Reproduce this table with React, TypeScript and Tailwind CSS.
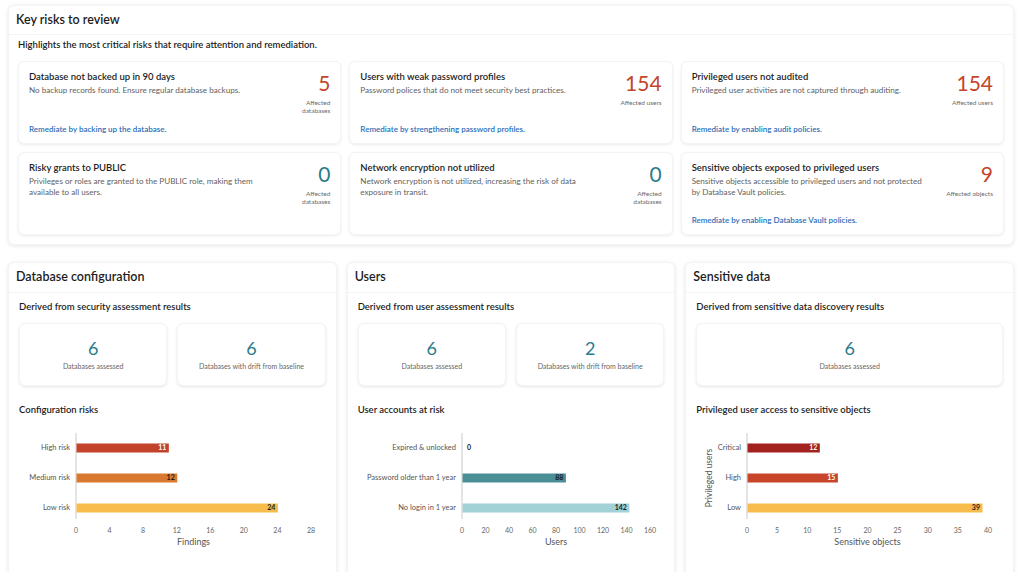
import React from "react";

const font = { fontFamily: "Lato, 'Noto Sans', sans-serif" };

type Risk = {
  title: string;
  desc: string;
  value: number;
  label: string;
  link?: string;
  tone: "red" | "teal";
};

const risks: Risk[] = [
  {
    title: "Database not backed up in 90 days",
    desc: "No backup records found. Ensure regular database backups.",
    value: 5,
    label: "Affected databases",
    link: "Remediate by backing up the database.",
    tone: "red",
  },
  {
    title: "Users with weak password profiles",
    desc: "Password polices that do not meet security best practices.",
    value: 154,
    label: "Affected users",
    link: "Remediate by strengthening password profiles.",
    tone: "red",
  },
  {
    title: "Privileged users not audited",
    desc: "Privileged user activities are not captured through auditing.",
    value: 154,
    label: "Affected users",
    link: "Remediate by enabling audit policies.",
    tone: "red",
  },
  {
    title: "Risky grants to PUBLIC",
    desc: "Privileges or roles are granted to the PUBLIC role, making them available to all users.",
    value: 0,
    label: "Affected databases",
    tone: "teal",
  },
  {
    title: "Network encryption not utilized",
    desc: "Network encryption is not utilized, increasing the risk of data exposure in transit.",
    value: 0,
    label: "Affected databases",
    tone: "teal",
  },
  {
    title: "Sensitive objects exposed to privileged users",
    desc: "Sensitive objects accessible to privileged users and not protected by Database Vault policies.",
    value: 9,
    label: "Affected objects",
    link: "Remediate by enabling Database Vault policies.",
    tone: "red",
  },
];

function RiskCard({ risk }: { risk: Risk }) {
  return (
    <div className="flex h-[83px] flex-col justify-between rounded-md border border-gray-100 bg-white pl-[10px] pr-[10px] pt-[8px] pb-[8px] shadow-[0_1px_3px_rgba(0,0,0,0.08)]">
      <div className="flex justify-between">
        <div className="max-w-[240px]">
          <div className="text-[9.5px] font-semibold leading-[13px] text-[#1d1d1d]">{risk.title}</div>
          <div className="mt-[2px] text-[8.1px] leading-[11px] text-[#5f5f5f]">{risk.desc}</div>
        </div>
        <div className="flex w-[54px] flex-col items-end pt-[1px] text-right">
          <div
            className={
              "text-[21px] leading-[24px] " +
              (risk.tone === "red" ? "text-[#c2462b]" : "text-[#2a7c8b]")
            }
          >
            {risk.value}
          </div>
          <div className="mt-[4px] text-[6.5px] leading-[8px] text-[#6b6b6b]">{risk.label}</div>
        </div>
      </div>
      {risk.link && (
        <div className="text-[8px] font-semibold leading-[11px] text-[#2a6eb8]">{risk.link}</div>
      )}
    </div>
  );
}

function StatBox({ value, label }: { value: number; label: string }) {
  return (
    <div className="flex h-[63px] flex-col items-center justify-center rounded-md border border-gray-100 bg-white shadow-[0_1px_3px_rgba(0,0,0,0.1)]">
      <div className="text-[18px] leading-[20px] text-[#2a7c8b]">{value}</div>
      <div className="mt-[4px] text-[7px] leading-[9px] text-[#666]">{label}</div>
    </div>
  );
}

type Bar = { label: string; value: number; color: string; text: string };

function BarChart({
  bars,
  axisX,
  max,
  step,
  title,
  yTitle,
}: {
  bars: Bar[];
  axisX: number;
  max: number;
  step: number;
  title: string;
  yTitle?: string;
}) {
  const right = 292;
  const scale = (right - axisX) / max;
  const ticks: number[] = [];
  for (let t = 0; t <= max; t += step) ticks.push(t);
  const ys = [27, 57, 87];
  return (
    <svg width="309" height="135" className="block" style={font}>
      {yTitle && (
        <text
          x={14}
          y={57}
          transform="rotate(-90 14 57)"
          textAnchor="middle"
          dominantBaseline="middle"
          fontSize="8.5"
          fill="#555"
        >
          {yTitle}
        </text>
      )}
      <line x1={axisX} x2={axisX} y1={12} y2={98} stroke="#c9c9c9" strokeWidth="1" />
      {bars.map((b, i) => {
        const w = b.value * scale;
        const y = ys[i];
        return (
          <g key={b.label}>
            <text x={axisX - 6} y={y} textAnchor="end" dominantBaseline="middle" fontSize="7.5" fill="#555">
              {b.label}
            </text>
            {w > 0 && <rect x={axisX + 0.5} y={y - 4.5} width={w} height={9} fill={b.color} />}
            <text
              x={w > 0 ? axisX + w - 2 : axisX + 5}
              y={y + 0.5}
              textAnchor={w > 0 ? "end" : "start"}
              dominantBaseline="middle"
              fontSize="7"
              fontWeight="700"
              fill={b.text}
            >
              {b.value}
            </text>
          </g>
        );
      })}
      {ticks.map((t) => (
        <text
          key={t}
          x={axisX + t * scale}
          y={110}
          textAnchor="middle"
          dominantBaseline="middle"
          fontSize="7"
          fill="#666"
        >
          {t}
        </text>
      ))}
      <text
        x={axisX + (right - axisX) / 2}
        y={122}
        textAnchor="middle"
        dominantBaseline="middle"
        fontSize="9"
        fill="#555"
      >
        {title}
      </text>
    </svg>
  );
}

function Panel({
  title,
  subtitle,
  stats,
  chartTitle,
  chart,
}: {
  title: string;
  subtitle: string;
  stats: { value: number; label: string }[];
  chartTitle: string;
  chart: React.ReactNode;
}) {
  return (
    <div className="h-[330px] rounded-md border border-gray-100 bg-white shadow-[0_1px_4px_rgba(0,0,0,0.1)]">
      <div className="flex h-[30px] items-center border-b border-gray-100 px-[7px]">
        <h2 className="text-[12.5px] font-semibold text-[#1d1d1d]">{title}</h2>
      </div>
      <div className="px-[10px] pt-[8px]">
        <div className="text-[9.5px] font-semibold leading-[12px] text-[#1d1d1d]">{subtitle}</div>
        <div className={"mt-[10px] grid gap-[10px] " + (stats.length === 2 ? "grid-cols-2" : "grid-cols-1")}>
          {stats.map((s) => (
            <StatBox key={s.label} value={s.value} label={s.label} />
          ))}
        </div>
        <div className="mt-[18px] text-[9.5px] font-semibold leading-[12px] text-[#1d1d1d]">{chartTitle}</div>
        <div className="mt-[5px]">{chart}</div>
      </div>
    </div>
  );
}

export default function App() {
  return (
    <div className="min-h-screen bg-white px-[8px] pt-[5px] pr-[10px]" style={font}>
      {/* Key risks */}
      <section className="rounded-md border border-gray-100 bg-white shadow-[0_1px_4px_rgba(0,0,0,0.1)]">
        <div className="flex h-[29px] items-center border-b border-gray-100 px-[7px]">
          <h1 className="text-[12.5px] font-semibold text-[#1d1d1d]">Key risks to review</h1>
        </div>
        <div className="px-[9px] pt-[4px] pb-[9px]">
          <p className="text-[9.5px] font-semibold leading-[12px] text-[#1d1d1d]">
            Highlights the most critical risks that require attention and remediation.
          </p>
          <div className="mt-[10px] grid grid-cols-3 gap-[8px]">
            {risks.map((r) => (
              <RiskCard key={r.title} risk={r} />
            ))}
          </div>
        </div>
      </section>

      {/* Summary panels */}
      <div className="mt-[17px] grid grid-cols-3 gap-[10px]">
        <Panel
          title="Database configuration"
          subtitle="Derived from security assessment results"
          stats={[
            { value: 6, label: "Databases assessed" },
            { value: 6, label: "Databases with drift from baseline" },
          ]}
          chartTitle="Configuration risks"
          chart={
            <BarChart
              axisX={57}
              max={28}
              step={4}
              title="Findings"
              bars={[
                { label: "High risk", value: 11, color: "#c2432a", text: "#ffffff" },
                { label: "Medium risk", value: 12, color: "#d9782f", text: "#1d1d1d" },
                { label: "Low risk", value: 24, color: "#f7bc4c", text: "#1d1d1d" },
              ]}
            />
          }
        />
        <Panel
          title="Users"
          subtitle="Derived from user assessment results"
          stats={[
            { value: 6, label: "Databases assessed" },
            { value: 2, label: "Databases with drift from baseline" },
          ]}
          chartTitle="User accounts at risk"
          chart={
            <BarChart
              axisX={104}
              max={160}
              step={20}
              title="Users"
              bars={[
                { label: "Expired & unlocked", value: 0, color: "#4a8e96", text: "#1d1d1d" },
                { label: "Password older than 1 year", value: 88, color: "#4a8e96", text: "#1d1d1d" },
                { label: "No login in 1 year", value: 142, color: "#a2d1d6", text: "#1d1d1d" },
              ]}
            />
          }
        />
        <Panel
          title="Sensitive data"
          subtitle="Derived from sensitive data discovery results"
          stats={[{ value: 6, label: "Databases assessed" }]}
          chartTitle="Privileged user access to sensitive objects"
          chart={
            <BarChart
              axisX={51}
              max={40}
              step={5}
              title="Sensitive objects"
              yTitle="Privileged users"
              bars={[
                { label: "Critical", value: 12, color: "#a3211f", text: "#ffffff" },
                { label: "High", value: 15, color: "#c8452b", text: "#ffffff" },
                { label: "Low", value: 39, color: "#f7bc4c", text: "#1d1d1d" },
              ]}
            />
          }
        />
      </div>
    </div>
  );
}
